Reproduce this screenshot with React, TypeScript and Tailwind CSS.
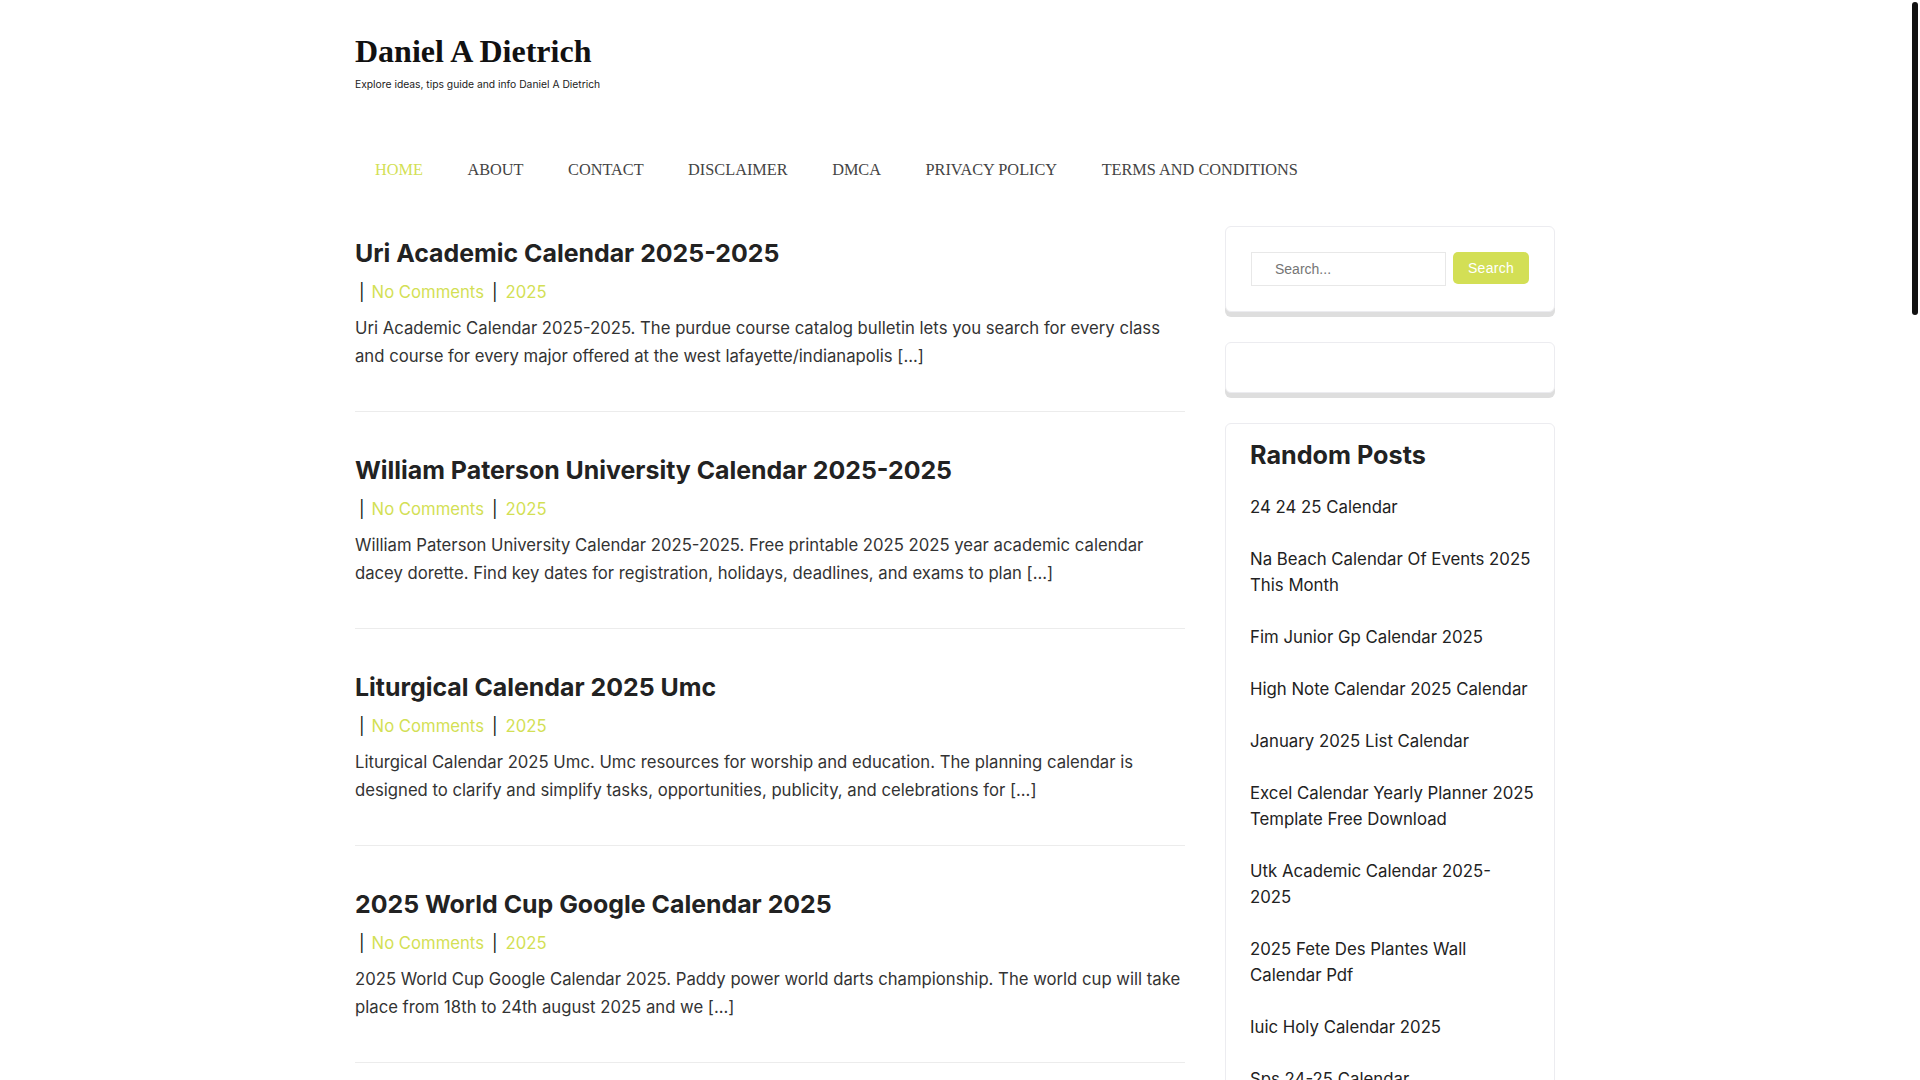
import React from 'react';

type Post = { title: string; lines: string[] };

const posts: Post[] = [
  {
    title: 'Uri Academic Calendar 2025-2025',
    lines: [
      'Uri Academic Calendar 2025-2025. The purdue course catalog bulletin lets you search for every class',
      'and course for every major offered at the west lafayette/indianapolis [...]',
    ],
  },
  {
    title: 'William Paterson University Calendar 2025-2025',
    lines: [
      'William Paterson University Calendar 2025-2025. Free printable 2025 2025 year academic calendar',
      'dacey dorette. Find key dates for registration, holidays, deadlines, and exams to plan [...]',
    ],
  },
  {
    title: 'Liturgical Calendar 2025 Umc',
    lines: [
      'Liturgical Calendar 2025 Umc. Umc resources for worship and education. The planning calendar is',
      'designed to clarify and simplify tasks, opportunities, publicity, and celebrations for [...]',
    ],
  },
  {
    title: '2025 World Cup Google Calendar 2025',
    lines: [
      '2025 World Cup Google Calendar 2025. Paddy power world darts championship. The world cup will take',
      'place from 18th to 24th august 2025 and we [...]',
    ],
  },
  {
    title: 'Sps 24-25 Calendar',
    lines: [
      'Sps 24-25 Calendar. Find important dates for the school year including the first day of school,',
      'holidays, breaks and the last day for students and [...]',
    ],
  },
  {
    title: 'Iuic Holy Calendar 2025',
    lines: [
      'Iuic Holy Calendar 2025. The holy days and feasts for the year are listed below with their dates',
      'so you can plan ahead for every gathering and [...]',
    ],
  },
  {
    title: 'January 2025 List Calendar',
    lines: [
      'January 2025 List Calendar. A simple list calendar for january 2025 with space for notes, tasks',
      'and reminders for every single day of the [...]',
    ],
  },
  {
    title: 'High Note Calendar 2025 Calendar',
    lines: [
      'High Note Calendar 2025 Calendar. Browse the upcoming concerts, rehearsals and events for the',
      'season and add them to your personal calendar [...]',
    ],
  },
  {
    title: 'Fim Junior Gp Calendar 2025',
    lines: [
      'Fim Junior Gp Calendar 2025. The full race schedule for the season with dates, circuits and',
      'countries for every round of the junior [...]',
    ],
  },
  {
    title: 'Utk Academic Calendar 2025-2025',
    lines: [
      'Utk Academic Calendar 2025-2025. View the dates for classes, exams, breaks and commencement',
      'for the fall, spring and summer terms at the [...]',
    ],
  },
  {
    title: '2025 Fete Des Plantes Wall Calendar Pdf',
    lines: [
      '2025 Fete Des Plantes Wall Calendar Pdf. Download a printable wall calendar with a different',
      'plant illustration for each month of the [...]',
    ],
  },
  {
    title: 'Na Beach Calendar Of Events 2025 This Month',
    lines: [
      'Na Beach Calendar Of Events 2025 This Month. See what is happening this month with festivals,',
      'concerts, markets and family events near the [...]',
    ],
  },
  {
    title: 'Excel Calendar Yearly Planner 2025 Template Free Download',
    lines: [
      'Excel Calendar Yearly Planner 2025 Template Free Download. A free yearly planner template you',
      'can edit in excel to organise your [...]',
    ],
  },
  {
    title: '24 24 25 Calendar',
    lines: [
      '24 24 25 Calendar. A printable calendar covering both years with holidays marked so you can',
      'plan school, work and travel for the [...]',
    ],
  },
];

// line breaks follow the reference sidebar
const randomPosts: string[][] = [
  ['24 24 25 Calendar'],
  ['Na Beach Calendar Of Events 2025', 'This Month'],
  ['Fim Junior Gp Calendar 2025'],
  ['High Note Calendar 2025 Calendar'],
  ['January 2025 List Calendar'],
  ['Excel Calendar Yearly Planner 2025', 'Template Free Download'],
  ['Utk Academic Calendar 2025-', '2025'],
  ['2025 Fete Des Plantes Wall', 'Calendar Pdf'],
  ['Iuic Holy Calendar 2025'],
  ['Sps 24-25 Calendar'],
];

const menu = ['HOME', 'ABOUT', 'CONTACT', 'DISCLAIMER', 'DMCA', 'PRIVACY POLICY', 'TERMS AND CONDITIONS'];

function Lines({ lines }: { lines: string[] }) {
  return (
    <>
      {lines.map((line, i) => (
        <React.Fragment key={i}>
          {i > 0 && <br />}
          {line}
        </React.Fragment>
      ))}
    </>
  );
}

function Widget({ children }: { children?: React.ReactNode }) {
  return (
    <div className="mb-[30px] rounded-[6px] border border-[#ececf0] bg-white shadow-[0_5px_0_#dedede]">
      {children}
    </div>
  );
}

export default function App() {
  return (
    <div className="flex bg-white font-['Inter',sans-serif] text-[#333]">
      <div className="min-w-0 flex-1">
        <div className="mx-auto w-[1200px] pb-[60px]">
          <header className="pt-[31px]">
            <h1 className="font-['Liberation_Serif',serif] text-[32px] font-bold leading-[40px] text-[#111]">
              Daniel A Dietrich
            </h1>
            <p className="mt-[5px] text-[10.3px] leading-[16px] text-[#222]">
              Explore ideas, tips guide and info Daniel A Dietrich
            </p>
          </header>

          <nav className="mt-[66px] flex gap-[4.5px] font-['Liberation_Serif',serif] text-[16.3px] leading-[24px]">
            {menu.map((item, i) => (
              <a key={item} href="#" className={i === 0 ? 'px-5 text-[#d3df55]' : 'px-5 text-[#444]'}>
                {item}
              </a>
            ))}
          </nav>

          <div className="mt-[44px] flex justify-between">
            <main className="w-[830px] pt-[10px]">
              {posts.map((post) => (
                <article key={post.title} className="mb-[41px] border-b border-[#ececec] pb-[41px]">
                  <h2 className="mb-[8px] text-[24.9px] font-bold leading-[34px] text-[#222]">
                    <a href="#">{post.title}</a>
                  </h2>
                  <div className="mb-[8px] flex items-center text-[16.7px] leading-[28px]">
                    <span className="ml-[4px] text-[#111]">|</span>
                    <a href="#" className="ml-[7px] text-[#d3df55]">No Comments</a>
                    <span className="ml-[8px] text-[#111]">|</span>
                    <a href="#" className="ml-[8px] text-[#d3df55]">2025</a>
                  </div>
                  <p className="whitespace-nowrap text-[16.7px] leading-[28px] text-[#333]">
                    <Lines lines={post.lines} />
                  </p>
                </article>
              ))}
            </main>

            <aside className="w-[330px]">
              <Widget>
                <form className="flex gap-[7px] p-[25px]" onSubmit={(e) => e.preventDefault()}>
                  <input
                    type="text"
                    placeholder="Search..."
                    className="h-[34px] w-[195px] border border-[#e8e8e8] pl-[23px] font-['Liberation_Sans',sans-serif] text-[14px] text-[#333] placeholder:text-[#757575] outline-none"
                  />
                  <button
                    type="submit"
                    className="h-[32px] w-[76px] rounded-[5px] bg-[#d3df55] font-['Liberation_Sans',sans-serif] text-[14px] tracking-[0.3px] text-white"
                  >
                    Search
                  </button>
                </form>
              </Widget>

              <Widget>
                <div className="h-[49px]" />
              </Widget>

              <Widget>
                <div className="px-[24px] pb-[20px] pt-[17px]">
                  <h3 className="mb-[11px] text-[25.2px] font-bold leading-[29px] text-[#222]">Random Posts</h3>
                  <ul>
                    {randomPosts.map((lines) => (
                      <li
                        key={lines.join(' ')}
                        className="whitespace-nowrap py-[13px] text-[16.8px] leading-[26px] text-[#222]"
                      >
                        <a href="#">
                          <Lines lines={lines} />
                        </a>
                      </li>
                    ))}
                  </ul>
                </div>
              </Widget>
            </aside>
          </div>
        </div>
      </div>

      {/* browser scrollbar from the screenshot */}
      <div className="w-[10px] shrink-0">
        <div className="sticky top-0 pt-[2px]">
          <div className="ml-[2px] h-[313px] w-[6px] rounded-full bg-[#111]" />
        </div>
      </div>
    </div>
  );
}
